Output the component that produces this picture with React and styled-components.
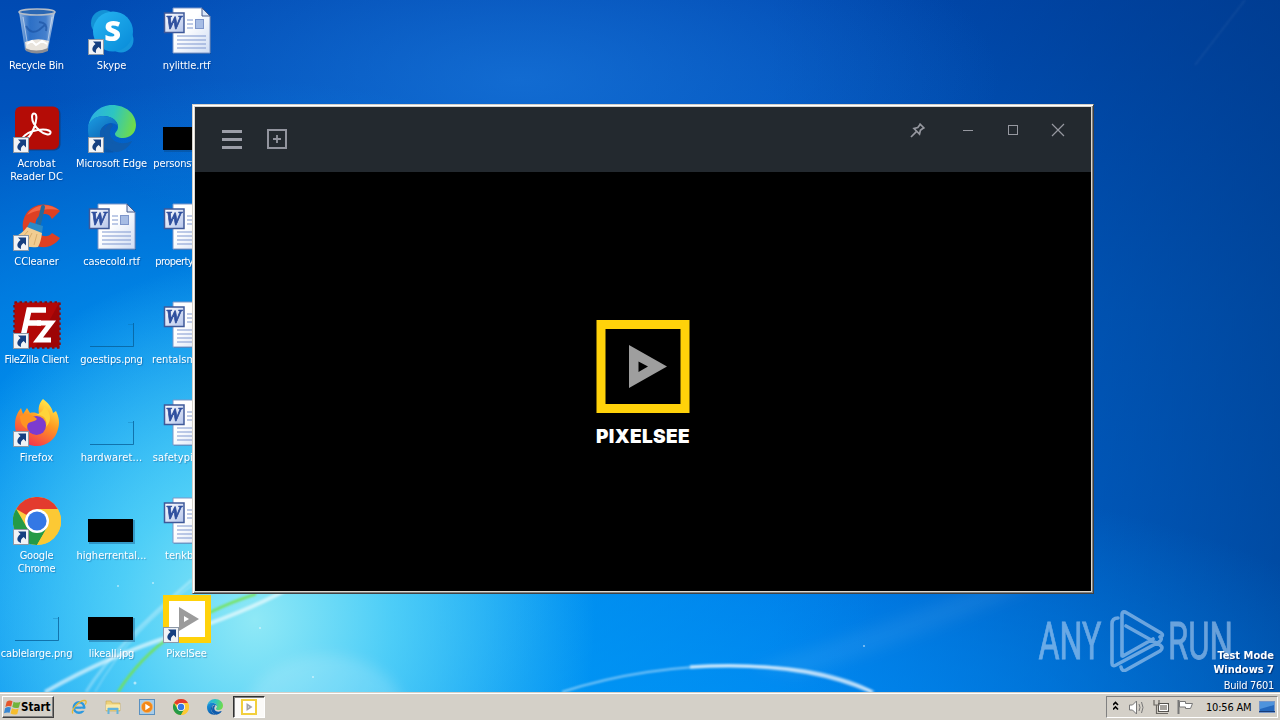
import React from 'react';
import styled, { createGlobalStyle } from 'styled-components';

const GlobalStyle = createGlobalStyle`
    * {
        box-sizing: border-box;
    }
    body {
        margin: 0;
        overflow: hidden;
        font-family: "DejaVu Sans Condensed", "DejaVu Sans", Tahoma, sans-serif;
        font-stretch: condensed;
        font-size: 11px;
    }
    svg {
        display: block;
        font-stretch: normal;
    }
`;

const Screen = styled.div`
    position: relative;
    display: flex;
    flex-direction: column;
    width: 1280px;
    height: 720px;
    overflow: hidden;
`;

const Desktop = styled.main`
    position: relative;
    flex: 1;
    display: flex;
    justify-content: space-between;
    align-items: flex-end;
    overflow: hidden;
    background:
        radial-gradient(ellipse 340px 360px at 255px 620px, rgba(150, 236, 246, 0.95) 0%, rgba(100, 220, 248, 0.75) 40%, rgba(40, 185, 250, 0) 100%),
        radial-gradient(ellipse 640px 480px at 240px 560px, rgba(20, 180, 250, 0.95) 0%, rgba(0, 155, 245, 0.65) 50%, rgba(0, 120, 230, 0) 100%),
        radial-gradient(ellipse 480px 190px at 520px 80px, rgba(30, 125, 225, 0.6) 0%, rgba(20, 105, 215, 0) 100%),
        radial-gradient(ellipse 800px 260px at 640px 720px, rgba(0, 145, 245, 0.9) 0%, rgba(0, 125, 240, 0) 100%),
        linear-gradient(90deg, rgba(0, 50, 130, 0) 0%, rgba(0, 50, 130, 0) 60%, rgba(0, 52, 125, 0.6) 100%),
        linear-gradient(180deg, #004ab2 0%, #0064d0 45%, #0072e4 100%);
`;

const WallpaperArt = styled.svg`
    position: absolute;
    left: 0;
    top: 0;
`;

const IconGrid = styled.div`
    position: relative;
    align-self: flex-start;
    display: grid;
    grid-auto-flow: column;
    grid-template-rows: repeat(7, 98px);
    grid-auto-columns: 74px;
    column-gap: 1px;
`;

const Shortcut = styled.div`
    display: flex;
    flex-direction: column;
    align-items: center;
    padding-top: 7px;
    gap: 4px;
`;

const IconBox = styled.div`
    position: relative;
    width: 48px;
    height: 48px;
    flex: none;
`;

const ShortcutArrow = styled.svg`
    position: absolute;
    left: 0;
    bottom: 0;
`;

const Label = styled.span`
    color: #fff;
    line-height: 13px;
    margin-right: 1px;
    text-align: center;
    white-space: pre;
    letter-spacing: ${props => props.$spacing || 0}px;
    text-shadow: 1px 1px 1px rgba(0, 30, 90, 0.3);
`;

const Watermark = styled.div`
    position: relative;
    width: 245px;
    height: 90px;
`;

const Build = styled.div`
    position: absolute;
    right: 6px;
    bottom: -2px;
    color: #fff;
    text-align: right;
    line-height: 14px;
    white-space: nowrap;
    text-shadow: 1px 1px 1px rgba(0, 20, 70, 0.6);
    & > strong {
        display: block;
    }
    & > span {
        display: block;
        line-height: 17px;
        letter-spacing: -0.3px;
    }
`;

const Window = styled.section`
    position: absolute;
    left: 192px;
    top: 104px;
    width: 902px;
    height: 490px;
    display: flex;
    flex-direction: column;
    padding: 1px;
    border: 1px solid;
    border-color: #d4d0c8 #404040 #404040 #d4d0c8;
    background: #d4d0c8;
    box-shadow: inset 1px 1px 0 #fff, inset -1px -1px 0 #808080;
`;

const WindowFrame = styled.div`
    flex: 1;
    display: flex;
    flex-direction: column;
    border: 1px solid #dcd8d0;
    background: #000;
`;

const TitleBar = styled.header`
    display: flex;
    justify-content: space-between;
    height: 65px;
    padding: 0 25px 0 27px;
    background: #23292f;
`;

const Tools = styled.div`
    display: flex;
    gap: 25px;
    padding-top: 22px;
`;

const Controls = styled.div`
    display: flex;
    gap: 29px;
    padding-top: 15px;
    & > svg:first-child {
        margin-right: 5px;
    }
`;

const Body = styled.div`
    flex: 1;
    display: flex;
    flex-direction: column;
    align-items: center;
    padding-top: 148px;
`;

const BrandName = styled.div`
    margin-top: 13px;
    color: #fff;
    font: 900 19px/22px Inter, sans-serif;
    letter-spacing: 0.35px;
`;

const Taskbar = styled.footer`
    display: flex;
    align-items: flex-start;
    height: 28px;
    padding: 3px 2px 0;
    background: #d4d0c8;
    border-top: 1px solid #d4d0c8;
    box-shadow: inset 0 1px 0 #fff;
`;

const StartButton = styled.div`
    display: flex;
    align-items: center;
    width: 52px;
    height: 22px;
    padding-left: 1px;
    border: 1px solid;
    border-color: #fff #404040 #404040 #fff;
    box-shadow: inset -1px -1px 0 #808080;
    font-weight: bold;
    font-size: 11.5px;
    color: #000;
`;

const QuickLaunch = styled.div`
    display: flex;
    gap: 18px;
    margin-left: 17px;
    padding-top: 3px;
`;

const ActiveTask = styled.div`
    display: flex;
    justify-content: center;
    align-items: center;
    width: 32px;
    height: 22px;
    margin-left: 10px;
    border: 1px solid;
    border-color: #303030 #fff #fff #303030;
    background: #fbfaf8;
    box-shadow: inset 1px 1px 0 #808080;
`;

const Tray = styled.div`
    display: flex;
    align-items: center;
    width: 172px;
    height: 22px;
    margin-left: auto;
    padding-left: 6px;
    border: 1px solid;
    border-color: #808080 #fff #fff #808080;
`;

const Clock = styled.span`
    margin: 0 8px 0 12px;
    color: #000;
    white-space: nowrap;
    letter-spacing: -0.2px;
`;

const RecycleBin = () => (
    <svg width="48" height="48" viewBox="0 0 48 48">
        <defs>
            <linearGradient id="glass" x1="0" x2="1">
                <stop offset="0" stopColor="#c4d6ea" stopOpacity=".8" />
                <stop offset=".3" stopColor="#4a88d2" stopOpacity=".6" />
                <stop offset=".75" stopColor="#6a9cda" stopOpacity=".65" />
                <stop offset="1" stopColor="#dde7f2" stopOpacity=".9" />
            </linearGradient>
        </defs>
        <path d="M6 5l6 38q12 6 23 0l7-38z" fill="url(#glass)" />
        <path d="M12 35q12-5 24-1l-2 9q-10 5-21 0z" fill="#e9e4dc" />
        <path d="M12 41q11 5 23 0v3q-11 5-22 0z" fill="#8b8d94" />
        <path d="M14 37l5-3 4 4 6-4 5 3" fill="none" stroke="#fff" strokeWidth="2" />
        <ellipse cx="24" cy="5" rx="18" ry="3" fill="#2b67b2" stroke="#b4bdc8" strokeWidth="1.600" />
        <path d="M13 19q5 9 13 4l7-6M26 15q9 1 7 9" fill="none" stroke="#174e9e" strokeWidth="2" opacity=".6" />
        <path d="M10 10l5 30M39 10l-5 29" stroke="#eef5fc" opacity=".55" />
    </svg>
);

const Skype = () => (
    <svg width="48" height="48" viewBox="0 0 48 48">
        <defs>
            <linearGradient id="sky" x1="0" y1="0" x2="1" y2="1">
                <stop offset="0" stopColor="#27b5f2" />
                <stop offset="1" stopColor="#078ad8" />
            </linearGradient>
        </defs>
        <circle cx="16" cy="16" r="13" fill="#1392d6" />
        <circle cx="33" cy="33" r="12.500" fill="#1596dc" />
        <circle cx="25" cy="24.500" r="20" fill="url(#sky)" />
        <text x="24.500" y="34" textAnchor="middle" fontFamily="Open Sans, sans-serif" fontWeight="800" fontSize="29" fill="#fff">S</text>
    </svg>
);

const WordFile = () => (
    <svg width="50" height="48" viewBox="0 0 50 48">
        <defs>
            <linearGradient id="paper" x1="0" y1="0" x2="1" y2="1">
                <stop offset=".4" stopColor="#fff" />
                <stop offset="1" stopColor="#cfdcf3" />
            </linearGradient>
            <linearGradient id="badge" x1="0" y1="0" x2="1" y2="1">
                <stop offset="0" stopColor="#fff" />
                <stop offset="1" stopColor="#b4c4ea" />
            </linearGradient>
        </defs>
        <path d="M11 2h29l8 8v37H11z" fill="#17386f" opacity=".35" />
        <path d="M10 1h29l8 8v37H10z" fill="url(#paper)" stroke="#7d97c8" />
        <path d="M39 1v8h8z" fill="#d9e5f8" stroke="#44598a" />
        <path d="M24 13h6M24 17h6M24 21h6M14 29h29M14 33h29M14 37h29M14 41h29" stroke="#7e97cf" />
        <rect x="32.500" y="12.500" width="8" height="9" fill="#a6bce4" stroke="#7d95ca" />
        <rect x="1.500" y="6" width="19.500" height="19.500" fill="url(#badge)" stroke="#3f5999" strokeWidth="1.500" />
        <text x="2.500" y="22" fontFamily="Liberation Serif, serif" fontWeight="bold" fontStyle="italic" fontSize="18" fill="#2f4f9e" stroke="#2f4f9e" strokeWidth=".7">W</text>
    </svg>
);

const Acrobat = () => (
    <svg width="48" height="48" viewBox="0 0 48 48">
        <rect x="2.500" y="2.500" width="45" height="43" rx="6" fill="#1c2c55" opacity=".55" />
        <rect x="2" y="1.500" width="44" height="43" rx="6" fill="#b40c06" />
        <path d="M21 8.500c3.500 0 3 7-.3 15-2.500 6-6 10.500-9 11-2.500.3-2.700-2 0-4C15 27 23 24.500 30 24.500c5 0 8 1.500 7.500 3.500-.7 2.500-6 1.800-11-2.500C21.500 21 19 15.500 19 12c0-2.300.8-3.500 2-3.500z" fill="none" stroke="#fff" strokeWidth="2" />
    </svg>
);

const EdgeLogo = ({ size }) => (
    <svg width={size} height={size} viewBox="0 0 48 48">
        <defs>
            <linearGradient id="edgeTop" x1="0" y1=".3" x2="1" y2=".5">
                <stop offset="0" stopColor="#2baee4" />
                <stop offset=".5" stopColor="#2dc5c1" />
                <stop offset="1" stopColor="#70dc48" />
            </linearGradient>
            <linearGradient id="edgeSide" x1="0" y1="0" x2=".6" y2="1">
                <stop offset="0" stopColor="#1b9de2" />
                <stop offset="1" stopColor="#0a55a8" />
            </linearGradient>
        </defs>
        <path d="M0 24C1 9 12 0 24 0c14 0 24 9 24 20 0 8-6 13-13 13-5 0-8-2-8-4s3-3 3-7c0-6-6-11-14-11C7 11 1 16 0 24z" fill="url(#edgeTop)" />
        <path d="M0 25C0 16 7 11 15 11c8 0 14 4 15 10-2-2-5-3-7-3-6 0-11 5-11 12 0 8 7 15 15 17C11 50 0 40 0 25z" fill="url(#edgeSide)" />
        <path d="M23 18c-5 2-8 7-7 13 1 10 9 15 17 13 6-2 9-5 11-8-10 5-21 1-22-7-.4-4 1-6 3-8z" fill="#0f5cae" />
        <path d="M12 28c0 9 6 17 16 19 7 0 13-5 16-11-9 6-26 5-28-9-.6-3 1-6 3-8-4 2-7 5-7 9z" fill="#0f5cae" />
    </svg>
);

const CCleaner = () => (
    <svg width="48" height="48" viewBox="0 0 48 48">
        <path d="M47 8C36-2 20 0 13 11c-8 13-1 31 15 33 8 1 15-3 19-9l-8-5c-4 5-12 4-15-2-4-8 0-16 7-17 4 0 6 1 8 5z" fill="#dd4023" />
        <path d="M46 7C35-1 21 1 14 12c8-5 22-7 32-5z" fill="#f46745" />
        <path d="M30 4l-4 17" stroke="#236a9e" strokeWidth="4" strokeLinecap="round" />
        <path d="M17 19l13 4-1 7-16-4z" fill="#2b8ac8" />
        <path d="M14 24l15 6q-1 9-4 14Q9 46 1 34q8-3 13-10z" fill="#f2cd91" />
        <path d="M15 28L8 36M19 30l-5 10M24 31l-3 11" stroke="#d8ad6b" strokeWidth="1" />
    </svg>
);

const FileZilla = () => (
    <svg width="48" height="48" viewBox="0 0 48 48">
        <rect x="1.500" y="1.500" width="45" height="45" fill="#b20807" stroke="#8d0808" strokeWidth="2.500" strokeDasharray="2.500 2.500" />
        <rect x="2" y="2" width="44" height="44" fill="#b20807" />
        <path d="M46 2v44H22z" fill="#8f0406" opacity=".6" />
        <path d="M10 36L16 9h17M13 22h15" fill="none" stroke="#fff" strokeWidth="5.500" />
        <path d="M24 22h14L25 39h13" fill="none" stroke="#fff" strokeWidth="5" />
    </svg>
);

const Firefox = () => (
    <svg width="48" height="48" viewBox="0 0 48 48">
        <defs>
            <linearGradient id="fox" x1=".8" y1="0" x2=".3" y2="1">
                <stop offset="0" stopColor="#fff44f" />
                <stop offset=".45" stopColor="#ff9b22" />
                <stop offset="1" stopColor="#f5304f" />
            </linearGradient>
        </defs>
        <path d="M30 0c5 4 9 8 10 14l3-2c3 6 4 12 2 18-2 10-11 17-21 17C11 47 2 38 2 26c0-7 2-12 6-17l2 6 4-6 3 5c4-1 6 0 9 1-1-6 0-11 4-15z" fill="url(#fox)" />
        <circle cx="23.500" cy="26.500" r="9.500" fill="#7c3bd0" />
        <path d="M7 17c6-3 11-2 16 2 2 1 0 3-5 4-4 1-4 4-4 7-5-3-7-7-7-13z" fill="#ff9422" />
        <path d="M23 16c8-1 12 5 10 12 7-7 4-16-2-21 0 4-3 7-8 9z" fill="#ffd43a" />
    </svg>
);

const ChromeLogo = ({ size }) => (
    <svg width={size} height={size} viewBox="0 0 48 48">
        <circle cx="24" cy="24" r="24" fill="#ffcd40" />
        <path d="M24 24L3.200 12A24 24 0 0 1 44.800 12z" fill="#e33b2e" />
        <path d="M3.200 12A24 24 0 0 0 24 48L34.400 30 13.600 30z" fill="#249a47" />
        <path d="M24 12h20.800A24 24 0 0 1 24 48l10.400-18z" fill="#fcc934" />
        <circle cx="24" cy="24" r="12" fill="#fff" />
        <circle cx="24" cy="24" r="9.600" fill="#3478e5" />
    </svg>
);

const DarkThumb = () => (
    <svg width="48" height="48" viewBox="0 0 48 48">
        <path d="M1 23h46v24H1z" fill="#0b3e73" opacity=".35" />
        <path d="M0 22h45v23H0z" fill="#000" />
    </svg>
);

const ClearThumb = () => (
    <svg width="48" height="48" viewBox="0 0 48 48">
        <path d="M2 45.500h43.500V22" fill="none" stroke="#075c94" opacity=".75" />
        <path d="M40 23.500h5" stroke="#075c94" opacity=".25" />
    </svg>
);

const PixelSeeIcon = () => (
    <svg width="48" height="48" viewBox="0 0 48 48">
        <rect x="3" y="3" width="42" height="42" fill="#fff" stroke="#ffd20a" strokeWidth="6" />
        <path d="M16 12v24l20-12zM21 21l5 3-5 3z" fill="#9b9b9b" fillRule="evenodd" />
    </svg>
);

const Arrow = () => (
    <ShortcutArrow width="16" height="16" viewBox="0 0 16 16">
        <rect x=".5" y=".5" width="15" height="15" fill="#f1f3f6" stroke="#8d98a6" />
        <path d="M5 2.500h8v8l-2.300-2.500C8.300 9.500 7.500 11 8 14 3.500 12.500 3 8.500 7.500 5z" fill="#153f80" />
    </ShortcutArrow>
);

const WinFlag = () => (
    <svg width="17" height="17" viewBox="0 0 16 16">
        <path d="M2.500 2.500Q5 .5 8 2L6.800 7Q4 5.800 1.300 7.500z" fill="#e4562c" />
        <path d="M9 2.500q3 1.700 6.500 0L14 8q-3 1.300-6.200-.4z" fill="#71b43c" />
        <path d="M1 8.600q3-1.900 5.500-.6L5.300 13Q2.600 12 0 13.500z" fill="#3887d2" />
        <path d="M7.500 8.700q3 1.500 6.300.3l-1.300 5q-3 1.500-6.300-.3z" fill="#f6bd2d" />
    </svg>
);

const Explorer = () => (
    <svg width="16" height="16" viewBox="0 0 16 16">
        <circle cx="8" cy="8.500" r="5.200" fill="none" stroke="#2c99df" strokeWidth="2.600" />
        <path d="M4 8.700h9" stroke="#2c99df" strokeWidth="2.200" />
        <path d="M10 10.800h5" stroke="#d4d0c8" strokeWidth="2" />
        <path d="M2 14.500C-1 12 8 1 14 1.500c2 .5 1 3 0 4" fill="none" stroke="#e5b935" strokeWidth="1.300" />
    </svg>
);

const Folder = () => (
    <svg width="16" height="16" viewBox="0 0 16 16">
        <path d="M1 2h5l1 2h8v8H1z" fill="#edd17b" stroke="#c8a84e" strokeWidth=".6" />
        <path d="M1 5.500h14V11H1z" fill="#faeaa9" />
        <path d="M3.500 15v-5h9v5M3 9.700h10" fill="none" stroke="#62b4dd" strokeWidth="2" />
    </svg>
);

const MediaPlayer = () => (
    <svg width="16" height="16" viewBox="0 0 16 16">
        <rect x=".5" y=".5" width="15" height="15" fill="#a8cce8" stroke="#5990c0" />
        <circle cx="8" cy="8" r="5.700" fill="#f28718" stroke="#fbbb6d" strokeWidth=".7" />
        <path d="M6.300 4.800v6.400l5-3.200z" fill="#fff" />
    </svg>
);

const Menu = () => (
    <svg width="20" height="20" viewBox="0 0 20 20">
        <path d="M0 2.500h20M0 10.500h20M0 18.500h20" stroke="#9c9ea8" strokeWidth="3" />
    </svg>
);

const AddFile = () => (
    <svg width="20" height="20" viewBox="0 0 20 20">
        <rect x="1" y="1" width="18" height="18" fill="none" stroke="#92949e" strokeWidth="2" />
        <path d="M6 10h8M10 6v8" stroke="#92949e" strokeWidth="1.800" />
    </svg>
);

const Pin = () => (
    <svg width="16" height="16" viewBox="0 0 16 16">
        <path d="M9.500 1.500l5 5M10.300 2.300L7.800 5.600 4 6.500l5.500 5.500.9-3.800 3.300-2.500M6.600 9.400L1 15" fill="none" stroke="#9698a0" strokeWidth="1.700" />
    </svg>
);

const Minimize = () => (
    <svg width="16" height="16" viewBox="0 0 16 16">
        <path d="M3 8.500h10" stroke="#9698a0" />
    </svg>
);

const Maximize = () => (
    <svg width="16" height="16" viewBox="0 0 16 16">
        <rect x="3.500" y="3.500" width="9" height="9" fill="none" stroke="#9698a0" />
    </svg>
);

const Close = () => (
    <svg width="16" height="16" viewBox="0 0 16 16">
        <path d="M2 2l12 12M14 2L2 14" stroke="#9698a0" strokeWidth="1.200" />
    </svg>
);

const BrandMark = () => (
    <svg width="94" height="93" viewBox="0 0 94 93">
        <rect x="5" y="4.500" width="84" height="84" fill="none" stroke="#ffd20a" strokeWidth="9" />
        <path d="M33 25v43l38-21.500zM42.500 41.500l9.500 5-9.500 5.500z" fill="#9e9e9e" fillRule="evenodd" />
    </svg>
);

const TaskIcon = () => (
    <svg width="16" height="16" viewBox="0 0 16 16">
        <rect x="1" y="1" width="14" height="14" fill="#fff" stroke="#f2cf3c" strokeWidth="2" />
        <path d="M5.500 4v8l6-4zM7 7.200l1.500.8-1.500.8z" fill="#a2a2a8" fillRule="evenodd" />
    </svg>
);

const TrayIcons = () => (
    <svg width="81" height="18" viewBox="0 0 81 18">
        <path d="M0 7l2.500-2.500L5 7M0 11.500L2.500 9 5 11.500" fill="none" stroke="#000" strokeWidth="1.600" />
        <path d="M16.500 7v5h3l4 4V3l-4 4z" fill="#fff" stroke="#777" />
        <path d="M26 6q2 3.500 0 7M28.500 4q3 5.500 0 11" fill="none" stroke="#777" />
        <rect x="45.500" y="5.500" width="10" height="8" fill="#a5a29d" stroke="#55534f" />
        <path d="M46.500 6.500h8v6h-8z" fill="none" stroke="#fff" />
        <path d="M41 2v5h5V2M43.500 7v8.500H54M47 15.500h8" fill="none" stroke="#6a6762" strokeWidth="1.200" />
        <path d="M65.500 2v14" stroke="#777" strokeWidth="2" />
        <path d="M66.500 3.500h6v2h7l-2 5h-5v-1.500h-6z" fill="#fff" stroke="#777" />
    </svg>
);

const DesktopPeek = () => (
    <svg width="16" height="12" viewBox="0 0 16 12">
        <rect x=".5" y=".5" width="15" height="11" fill="#2468bd" stroke="#7596c8" />
        <path d="M1 1h14v3L1 8z" fill="#4e93dc" />
        <path d="M0 10.500h16" stroke="#163b79" />
    </svg>
);

const AnyRun = () => (
    <svg width="215" height="70" viewBox="0 0 215 70" opacity=".5">
        <g fill="#d3e5fa" stroke="#d3e5fa" strokeWidth=".8" fontFamily="Roboto, sans-serif" fontSize="52">
            <text x="3.500" y="57" textLength="63" lengthAdjust="spacingAndGlyphs">ANY</text>
            <text x="133" y="57" textLength="65" lengthAdjust="spacingAndGlyphs">RUN</text>
        </g>
        <g fill="none" stroke="#d3e5fa" strokeWidth="3.600" strokeLinejoin="round" strokeLinecap="round">
            <path d="M83 16q-6 0-6 6v39q0 4 4 2l43-23q4-3 1-5M87 54V13q0-5 5-2l34 20q3 2 0 4M91 24l34 19q4 3 0 6L91 68q-4 2-5-3M88 54l30-17" />
        </g>
    </svg>
);

const shortcuts = [
    { name: 'Recycle Bin', icon: RecycleBin, spacing: -0.2 },
    { name: 'Acrobat\nReader DC', icon: Acrobat, link: true },
    { name: 'CCleaner', icon: CCleaner, link: true, spacing: -0.1 },
    { name: 'FileZilla Client', icon: FileZilla, link: true, spacing: -0.33 },
    { name: 'Firefox', icon: Firefox, link: true, spacing: 0.1 },
    { name: 'Google\nChrome', icon: ChromeLogo, link: true, spacing: -0.2 },
    { name: 'cablelarge.png', icon: ClearThumb, spacing: -0.15 },
    { name: 'Skype', icon: Skype, link: true, spacing: -0.1 },
    { name: 'Microsoft Edge', icon: EdgeLogo, link: true, spacing: -0.15 },
    { name: 'casecold.rtf', icon: WordFile, spacing: -0.1 },
    { name: 'goestips.png', icon: ClearThumb, spacing: -0.1 },
    { name: 'hardwaret...', icon: ClearThumb, spacing: 0.15 },
    { name: 'higherrental...', icon: DarkThumb },
    { name: 'likeall.jpg', icon: DarkThumb, spacing: -0.15 },
    { name: 'nylittle.rtf', icon: WordFile, spacing: -0.1 },
    { name: 'personstate...', icon: DarkThumb, spacing: -0.15 },
    { name: 'propertylist.rtf', icon: WordFile, spacing: -0.55 },
    { name: 'rentalsmost...', icon: WordFile, spacing: 0.05 },
    { name: 'safetypiece...', icon: WordFile, spacing: 0.05 },
    { name: 'tenkb.rtf', icon: WordFile },
    { name: 'PixelSee', icon: PixelSeeIcon, link: true, spacing: -0.1 },
];

const Wallpaper = () => (
    <WallpaperArt width="1280" height="692" viewBox="0 0 1280 692">
        <defs>
            <filter id="soft"><feGaussianBlur stdDeviation="1.200" /></filter>
            <filter id="haze"><feGaussianBlur stdDeviation="7" /></filter>
        </defs>
        <g fill="none" stroke="#fff" filter="url(#soft)">
            <path d="M45 692Q110 655 175 635T290 588" strokeWidth="4" opacity=".6" />
            <path d="M86 692Q115 645 192 580" strokeWidth="3" opacity=".3" />
            <path d="M95 692Q130 630 194 584" strokeWidth="1.500" opacity=".3" />
            <path d="M118 692Q160 625 256 594" stroke="#76e34d" strokeWidth="2.500" opacity=".9" />
            <path d="M562 692Q650 664 745 666Q825 666 874 692" strokeWidth="2" opacity=".5" />
            <path d="M690 667Q800 660 872 692" strokeWidth="3.500" opacity=".7" />
            <path d="M1195 65L1245 0" opacity=".12" />
        </g>
        <g fill="#fff" filter="url(#haze)">
            <path d="M750 668Q900 620 1050 560L1060 575Q930 635 800 677z" opacity=".06" />
            <ellipse cx="325" cy="710" rx="78" ry="55" opacity=".16" />
        </g>
        <g fill="#fff" opacity=".55">
            <circle cx="135" cy="683" r="1.500" />
            <circle cx="118" cy="586" r="1" />
            <circle cx="153" cy="583" r="1" />
            <circle cx="260" cy="628" r="1" />
            <circle cx="313" cy="677" r="1" />
            <circle cx="864" cy="646" r="1" />
        </g>
    </WallpaperArt>
);

const App = () => {
    return (
        <Screen>
            <GlobalStyle />
            <Desktop>
                <Wallpaper />
                <IconGrid>
                    {shortcuts.map(({ name, icon: Icon, link, spacing }) => (
                        <Shortcut key={name}>
                            <IconBox>
                                <Icon size={48} />
                                {link && <Arrow />}
                            </IconBox>
                            <Label $spacing={spacing}>{name}</Label>
                        </Shortcut>
                    ))}
                </IconGrid>
                <Watermark>
                    <AnyRun />
                    <Build>
                        <strong>Test Mode</strong>
                        <strong>Windows 7</strong>
                        <span>Build 7601</span>
                    </Build>
                </Watermark>
            </Desktop>
            <Taskbar>
                <StartButton><WinFlag />Start</StartButton>
                <QuickLaunch>
                    <Explorer />
                    <Folder />
                    <MediaPlayer />
                    <ChromeLogo size={16} />
                    <EdgeLogo size={16} />
                </QuickLaunch>
                <ActiveTask><TaskIcon /></ActiveTask>
                <Tray>
                    <TrayIcons />
                    <Clock>10:56 AM</Clock>
                    <DesktopPeek />
                </Tray>
            </Taskbar>
            <Window>
                <WindowFrame>
                    <TitleBar>
                        <Tools>
                            <Menu />
                            <AddFile />
                        </Tools>
                        <Controls>
                            <Pin />
                            <Minimize />
                            <Maximize />
                            <Close />
                        </Controls>
                    </TitleBar>
                    <Body>
                        <BrandMark />
                        <BrandName>PIXELSEE</BrandName>
                    </Body>
                </WindowFrame>
            </Window>
        </Screen>
    );
};

export default App;
